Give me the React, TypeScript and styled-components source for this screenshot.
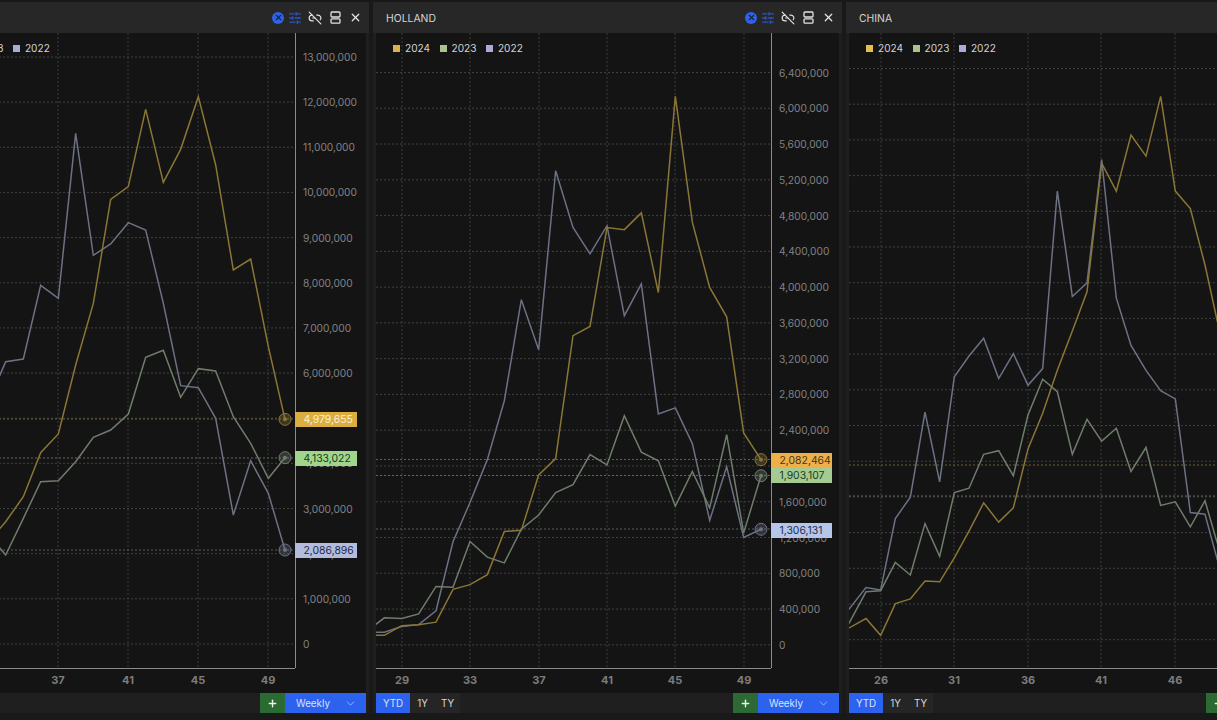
import React from 'react';
import styled, { createGlobalStyle } from 'styled-components';
import { ChevronDown, Link2Off, Plus, SlidersHorizontal, X } from 'lucide-react';

const GlobalStyle = createGlobalStyle`
  html, body { margin: 0; padding: 0; background: #191919; overflow: hidden; }
  * { box-sizing: border-box; }
`;

const Page = styled.div`
  width: 1217px;
  height: 720px;
  overflow: hidden;
  padding-top: 2px;
  font-family: Inter, "Liberation Sans", sans-serif;
`;
const Strip = styled.div`
  display: flex;
  gap: 4px;
  margin-left: -100px;
  width: 1500px;
`;
const Panel = styled.section`
  flex: none;
  width: 469px;
  height: 711px;
  display: flex;
  flex-direction: column;
  background: #1f1f1f;
`;
const Header = styled.header`
  flex: none;
  height: 31px;
  display: flex;
  align-items: center;
  justify-content: space-between;
  padding: 0 4px 0 13px;
  background: #272727;
`;
const Title = styled.span`
  font-size: 10.4px;
  line-height: 12px;
  padding-top: 2px;
  color: #d4d4d4;
`;
const Tools = styled.div`
  display: flex;
  align-items: center;
`;
const ClearBadge = styled.span`
  width: 12px;
  height: 12px;
  margin: 0 1px;
  border-radius: 50%;
  background: #2f62e8;
  color: #16213f;
  display: flex;
  align-items: center;
  justify-content: center;
`;
const ToolSlot = styled.span<{ $color?: string }>`
  width: 20px;
  height: 20px;
  display: flex;
  align-items: center;
  justify-content: center;
  color: ${p => p.$color || '#e4e4e4'};
`;
const ChartArea = styled.div`
  position: relative;
  flex: none;
  height: 660px;
  margin: 0 3px;
  overflow: hidden;
  background: #141414;
`;
const ChartSvg = styled.svg`
  display: block;
`;
const Legend = styled.div`
  position: absolute;
  left: 17px;
  top: 8px;
  display: flex;
  gap: 9.5px;
  font-size: 10.1px;
  color: #d2d2d2;
`;
const LegendItem = styled.span`
  display: flex;
  align-items: center;
  gap: 5px;
  line-height: 14px;
`;
const Swatch = styled.i<{ $color: string }>`
  display: block;
  width: 7px;
  height: 7px;
  background: ${p => p.$color};
`;
const ValueBadge = styled.span<{ $bg: string; $fg: string; $left: number; $top: number; $width: number }>`
  position: absolute;
  left: ${p => p.$left}px;
  top: ${p => p.$top}px;
  width: ${p => p.$width}px;
  height: 15px;
  padding-left: 8.5px;
  font-size: 10.4px;
  line-height: 15px;
  background: ${p => p.$bg};
  color: ${p => p.$fg};
`;
const Footer = styled.footer`
  flex: none;
  height: 20px;
  margin: 0 3px;
  display: flex;
  justify-content: space-between;
  font-size: 9.8px;
  color: #d8d8d8;
`;
const Ranges = styled.div`
  display: flex;
  background: #252525;
`;
const RangeButton = styled.span<{ $active?: boolean }>`
  width: ${p => (p.$active ? 34 : 25)}px;
  display: flex;
  align-items: center;
  justify-content: center;
  background: ${p => (p.$active ? '#2d62ee' : 'transparent')};
  color: ${p => (p.$active ? '#d7e2ff' : '#d8d8d8')};
`;
const Controls = styled.div`
  display: flex;
`;
const AddButton = styled.span`
  width: 25px;
  display: flex;
  align-items: center;
  justify-content: center;
  background: #2c6a34;
  color: #eef5ee;
`;
const PeriodSelect = styled.span`
  width: 81px;
  padding: 0 9px 0 11px;
  display: flex;
  align-items: center;
  justify-content: space-between;
  background: #2d62ee;
  color: #d7e2ff;
`;

const H = 660;
const GOLD = '#8a7636';
const SLATE = '#6c7184';
const SAGE = '#6f7d6c';

type Tick = { label: string; y: number };
type Badge = { text: string; y: number; bg: string; fg: string };
type Series = { color: string; pts: [number, number][] };
type PanelSpec = {
  title: string;
  left: number;
  axisX: number;
  badgeWidth: number;
  yTicks: Tick[];
  xTicks: { label: string; x: number }[];
  series: Series[];
  guides: { y: number; color: string }[];
  badges: Badge[];
  legend: string[];
};

const zip = (xs: number[], ys: number[], ox: number, sy: number): [number, number][] =>
  xs.map((x, i) => [ox + x / 3, 90 + ys[i] / sy]);

const fmt = (n: number) => n.toLocaleString('en-US');
const ticks = (first: number, step: number, top: number, dv: number, count: number): Tick[] =>
  Array.from({ length: count }, (_, i) => ({ label: fmt(top - i * dv), y: first + i * step }));

const x1 = [-35, 0, 17, 70, 122, 175, 227, 280, 332, 385, 437, 490, 542, 595, 647, 700, 752, 805, 855];
const x2 = [0, 28, 80, 131, 183, 234, 285, 337, 388, 439, 491, 542, 594, 645, 696, 748, 799, 850, 901, 952, 1004, 1055, 1106, 1158];
const x3 = [5, 57, 101, 145, 190, 234, 278, 322, 366, 410, 455, 499, 543, 587, 631, 676, 720, 764, 808, 852, 897, 941, 985, 1030, 1074, 1108, 1160];

const panels: PanelSpec[] = [
  {
    title: 'GERMANY',
    left: -97,
    axisX: 295,
    badgeWidth: 62,
    yTicks: ticks(57, 45.15, 13000000, 1000000, 14),
    xTicks: [
      { label: '33', x: -12 },
      { label: '37', x: 58 },
      { label: '41', x: 128 },
      { label: '45', x: 198 },
      { label: '49', x: 268 },
    ],
    series: [
      { color: SLATE, pts: zip(x1, [900, 855, 815, 807, 586, 625, 130, 496, 462, 398, 420, 640, 887, 893, 985, 1275, 1112, 1210, 1380], 0, 3) },
      { color: SAGE, pts: zip(x1, [1340, 1375, 1395, 1285, 1175, 1172, 1115, 1042, 1020, 972, 802, 781, 922, 836, 843, 980, 1060, 1165, 1103], 0, 3) },
      { color: GOLD, pts: zip(x1, [1360, 1315, 1295, 1220, 1088, 1032, 825, 640, 328, 290, 58, 277, 178, 20, 225, 540, 507, 770, 988], 0, 3) },
    ],
    guides: [
      { y: 419, color: '#6f6030' },
      { y: 458, color: '#5f6a5a' },
      { y: 550, color: '#585c6c' },
    ],
    badges: [
      { text: '4,979,655', y: 412, bg: '#dcae42', fg: '#f8f2dc' },
      { text: '4,133,022', y: 451, bg: '#a0d68c', fg: '#1d3a1a' },
      { text: '2,086,896', y: 543, bg: '#b3bcdd', fg: '#27294c' },
    ],
    legend: ['#dfae4e', '#a8c48c', '#aeaad8'],
  },
  {
    title: 'HOLLAND',
    left: 376,
    axisX: 771,
    badgeWidth: 61,
    yTicks: ticks(72.5, 35.77, 6400000, 400000, 17),
    xTicks: [
      { label: '29', x: 402 },
      { label: '33', x: 470 },
      { label: '37', x: 539 },
      { label: '41', x: 607 },
      { label: '45', x: 675 },
      { label: '49', x: 744 },
    ],
    series: [
      { color: SLATE, pts: zip(x2, [1518, 1518, 1502, 1497, 1458, 1265, 1155, 1035, 870, 587, 727, 226, 385, 459, 380, 632, 543, 907, 890, 990, 1205, 1055, 1253, 1230], 375, 2.8) },
      { color: SAGE, pts: zip(x2, [1498, 1478, 1480, 1467, 1390, 1392, 1264, 1308, 1324, 1230, 1190, 1127, 1105, 1021, 1050, 912, 1014, 1038, 1165, 1068, 1170, 965, 1240, 1080], 375, 2.8) },
      { color: GOLD, pts: zip(x2, [1527, 1527, 1500, 1497, 1490, 1398, 1385, 1357, 1236, 1233, 1078, 1032, 688, 662, 385, 391, 344, 567, 18, 370, 553, 635, 960, 1035], 375, 2.8) },
    ],
    guides: [
      { y: 459.5, color: '#6f6030' },
      { y: 475.5, color: '#5f6a5a' },
      { y: 529, color: '#585c6c' },
    ],
    badges: [
      { text: '1,903,107', y: 468, bg: '#a5cb92', fg: '#1b3f20' },
      { text: '2,082,464', y: 453, bg: '#eeb04a', fg: '#4a3510' },
      { text: '1,306,131', y: 523, bg: '#b6c5ea', fg: '#25304f' },
    ],
    legend: ['#dfae4e', '#a8c48c', '#aeaad8'],
  },
  {
    title: 'CHINA',
    left: 849,
    axisX: 1244,
    badgeWidth: 61,
    yTicks: [],
    xTicks: [
      { label: '26', x: 881 },
      { label: '31', x: 954 },
      { label: '36', x: 1028 },
      { label: '41', x: 1101 },
      { label: '46', x: 1175 },
    ],
    series: [
      { color: SLATE, pts: zip(x3, [1455, 1393, 1400, 1200, 1140, 902, 1097, 803, 745, 695, 808, 738, 827, 780, 283, 578, 540, 195, 583, 715, 785, 842, 865, 1183, 1188, 1305, 1480], 847, 2.8) },
      { color: SAGE, pts: zip(x3, [1495, 1405, 1402, 1323, 1358, 1214, 1306, 1127, 1115, 1020, 1010, 1080, 910, 810, 845, 1020, 922, 983, 947, 1068, 1001, 1163, 1153, 1223, 1150, 1260, 1400], 847, 2.8) },
      { color: GOLD, pts: zip(x3, [1507, 1480, 1527, 1438, 1425, 1375, 1377, 1310, 1235, 1156, 1210, 1170, 1005, 905, 785, 675, 565, 205, 283, 126, 185, 18, 283, 332, 490, 635, 850], 847, 2.8) },
    ],
    guides: [
      { y: 465, color: '#6f6030' },
      { y: 496, color: '#5f6a5a' },
    ],
    badges: [],
    legend: ['#e4bf4e', '#a8c48c', '#aeaad8'],
  },
];

const thirdPanelRows: Tick[] = Array.from({ length: 17 }, (_, i) => ({ label: '', y: 68.5 + i * 35.7 }));

const SplitIcon = () => (
  <svg width="11" height="13" viewBox="0 0 11 13" fill="none" stroke="currentColor" strokeWidth="1.3">
    <rect x="1" y="1" width="9" height="5" rx="1" />
    <rect x="1" y="7.8" width="9" height="4.4" rx="1" />
  </svg>
);

const Chart = ({ spec }: { spec: PanelSpec }) => {
  const toX = (x: number) => x - spec.left;
  const toY = (y: number) => y - 33;
  const ax = toX(spec.axisX);
  const ay = toY(668);
  const rows = spec.yTicks.length ? spec.yTicks : thirdPanelRows;
  const last = (s: Series) => s.pts[s.pts.length - 1];
  return (
    <ChartArea>
      <ChartSvg width={462} height={H} viewBox={`0 0 462 ${H}`}>
        {rows.map(t => (
          <line key={t.y} x1={0} x2={ax} y1={toY(t.y)} y2={toY(t.y)} stroke="#404040" strokeDasharray="2 2" />
        ))}
        {spec.xTicks.map(t => (
          <line key={t.x} x1={toX(t.x)} x2={toX(t.x)} y1={0} y2={ay} stroke="#3a3a3a" strokeDasharray="2 2" />
        ))}
        {spec.guides.map(g => (
          <line key={g.y} x1={0} x2={ax} y1={toY(g.y)} y2={toY(g.y)} stroke={g.color} strokeDasharray="2 2" />
        ))}
        {spec.series.map(s => (
          <polyline
            key={s.color}
            fill="none"
            stroke={s.color}
            strokeWidth={1.5}
            strokeLinejoin="miter"
            points={s.pts.map(p => `${toX(p[0])},${toY(p[1])}`).join(' ')}
          />
        ))}
        {spec.badges.length > 0 && spec.series.map(s => (
          <g key={s.color}>
            <circle cx={toX(last(s)[0])} cy={toY(last(s)[1])} r={6} fill={s.color} fillOpacity={0.35} stroke={s.color} />
            <circle cx={toX(last(s)[0])} cy={toY(last(s)[1])} r={2} fill={s.color} />
          </g>
        ))}
        <line x1={ax + 0.5} x2={ax + 0.5} y1={0} y2={ay} stroke="#8b8b8b" />
        <line x1={0} x2={ax} y1={ay + 0.5} y2={ay + 0.5} stroke="#8b8b8b" />
        {spec.yTicks.map(t => (
          <text key={t.label} x={ax + 8} y={toY(t.y) + 4} fontSize={10.2} fill="#828282">{t.label}</text>
        ))}
        {spec.xTicks.map(t => (
          <text key={t.label} x={toX(t.x)} y={toY(684)} fontSize={11} fontWeight={700} fill="#7c7c7c" textAnchor="middle">{t.label}</text>
        ))}
      </ChartSvg>
      <Legend>
        {['2024', '2023', '2022'].map((year, i) => (
          <LegendItem key={year}>
            <Swatch $color={spec.legend[i]} />
            {year}
          </LegendItem>
        ))}
      </Legend>
      {spec.badges.map(b => (
        <ValueBadge key={b.text} $bg={b.bg} $fg={b.fg} $left={ax} $top={toY(b.y)} $width={spec.badgeWidth}>
          {b.text}
        </ValueBadge>
      ))}
    </ChartArea>
  );
};

const ChartPanel = ({ spec }: { spec: PanelSpec }) => (
  <Panel>
    <Header>
      <Title>{spec.title}</Title>
      <Tools>
        <ClearBadge><X size={9} strokeWidth={3} /></ClearBadge>
        <ToolSlot $color="#2d55c4"><SlidersHorizontal size={14} strokeWidth={2.4} /></ToolSlot>
        <ToolSlot><Link2Off size={14} /></ToolSlot>
        <ToolSlot><SplitIcon /></ToolSlot>
        <ToolSlot><X size={13} strokeWidth={2.2} /></ToolSlot>
      </Tools>
    </Header>
    <Chart spec={spec} />
    <Footer>
      <Ranges>
        <RangeButton $active>YTD</RangeButton>
        <RangeButton>1Y</RangeButton>
        <RangeButton>TY</RangeButton>
      </Ranges>
      <Controls>
        <AddButton><Plus size={11} strokeWidth={3} /></AddButton>
        <PeriodSelect>
          Weekly
          <ChevronDown size={13} color="#a9c0fb" strokeWidth={1.5} />
        </PeriodSelect>
      </Controls>
    </Footer>
  </Panel>
);

export default function App() {
  return (
    <Page>
      <GlobalStyle />
      <Strip>
        {panels.map(p => <ChartPanel key={p.title} spec={p} />)}
      </Strip>
    </Page>
  );
}
